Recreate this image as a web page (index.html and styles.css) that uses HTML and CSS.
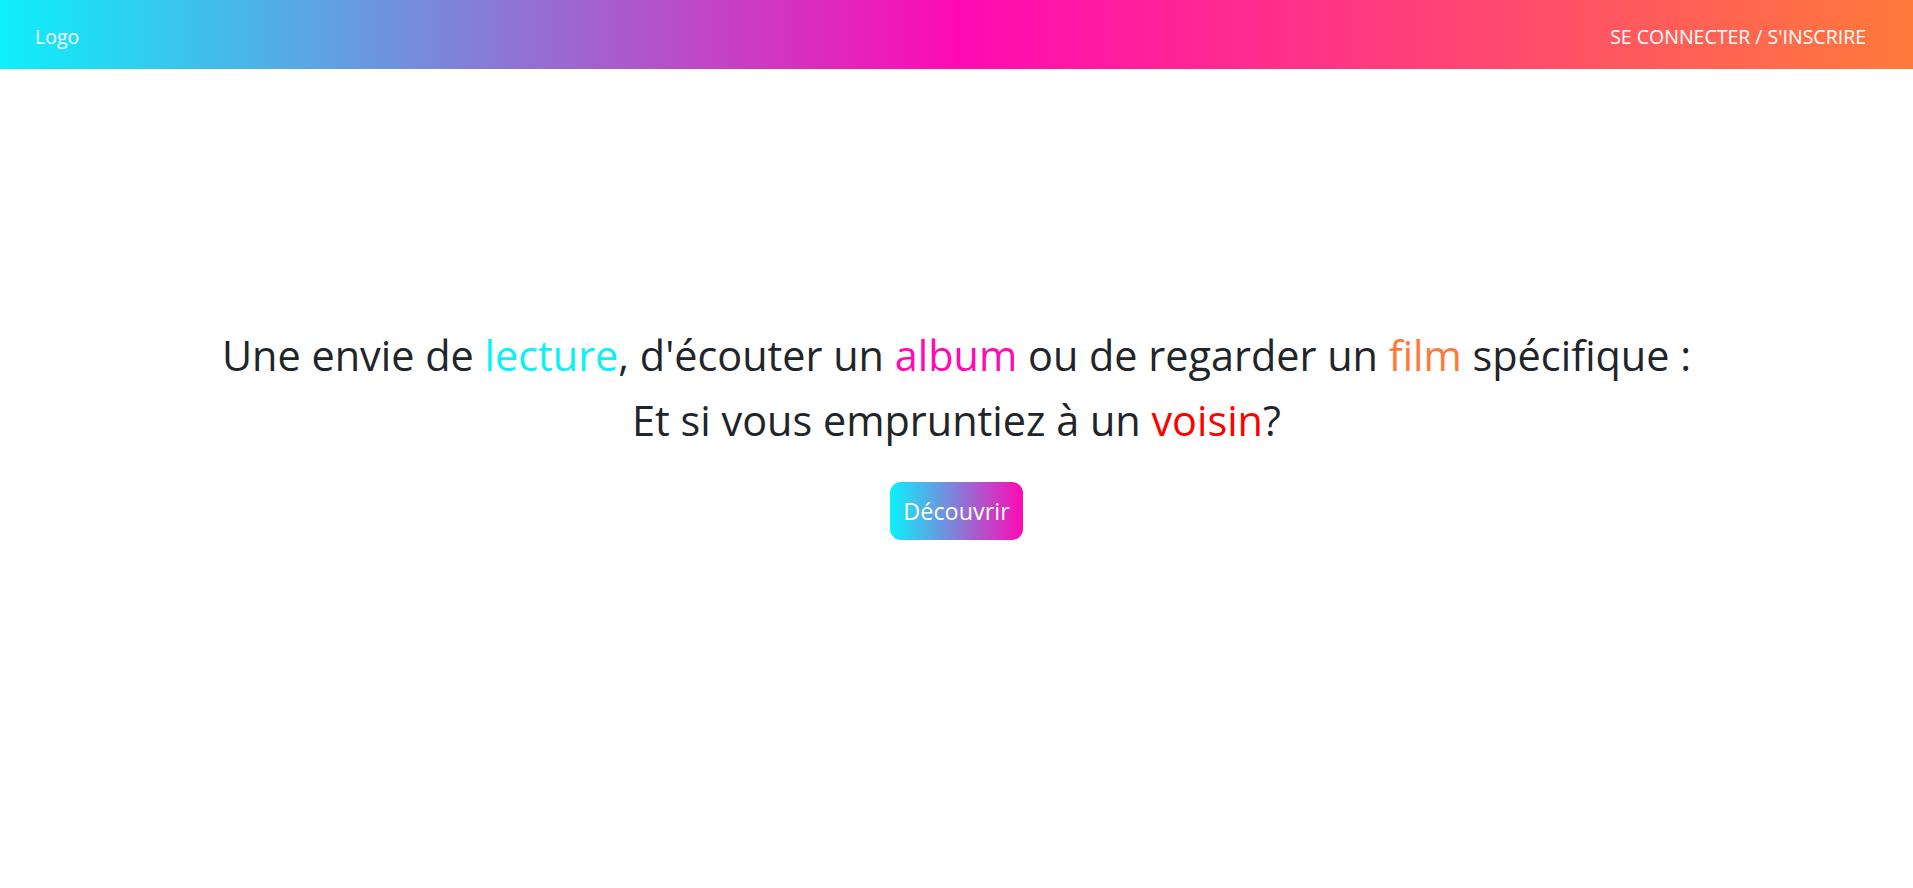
FILE: index.html
```html
<!DOCTYPE html>
<html lang="fr">
<head>
<meta charset="utf-8">
<title>Accueil</title>
<link rel="stylesheet" href="styles.css">
</head>
<body>
<header class="topbar">
  <a class="brand" href="#">Logo</a>
  <a class="auth" href="#">SE CONNECTER / S'INSCRIRE</a>
</header>
<main class="hero">
  <p class="pitch">Une envie de <span class="c-cyan">lecture</span>, d'écouter un <span class="c-pink">album</span> ou de regarder un <span class="c-orange">film</span> spécifique :<br>Et si vous empruntiez à un <span class="c-red">voisin</span>?</p>
  <a class="cta" href="#">Découvrir</a>
</main>
</body>
</html>
```
FILE: styles.css
```css
* { box-sizing: border-box; }
html, body { margin: 0; padding: 0; }
body {
  font-family: "Open Sans", "Noto Sans", sans-serif;
  color: #212529;
  background: #fff;
}
.topbar {
  height: 69px;
  display: flex;
  align-items: center;
  justify-content: space-between;
  padding: 3px 47px 0 35px;
  background: linear-gradient(90deg, #0cf0fa 0%, #ff0ab4 50%, #ff7a3a 100%);
}
.topbar a {
  color: #fff;
  text-decoration: none;
  font-size: 19.5px;
}
.hero {
  display: flex;
  flex-direction: column;
  align-items: center;
  padding-top: 254px;
}
.pitch {
  margin: 0;
  text-align: center;
  font-size: 41.4px;
  line-height: 65px;
}
.c-cyan { color: #0cf0fa; }
.c-pink { color: #ff0ab4; }
.c-orange { color: #ff7a3a; }
.c-red { color: #ff0000; }
.cta {
  margin-top: 29px;
  display: inline-block;
  padding: 12px 13px;
  font-size: 23.4px;
  line-height: 34px;
  color: #fff;
  text-decoration: none;
  border-radius: 11px;
  background: linear-gradient(90deg, #0cf0fa 0%, #ff0ab4 100%);
}
```
